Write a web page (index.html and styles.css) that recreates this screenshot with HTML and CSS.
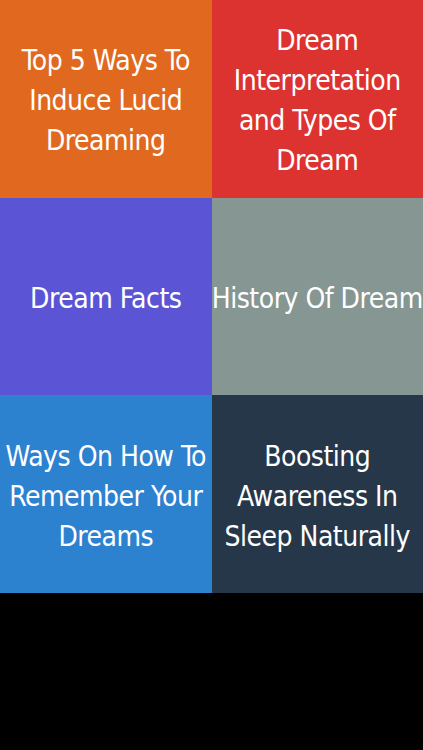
FILE: index.html
```html
<!DOCTYPE html>
<html lang="en">
<head>
    <meta charset="UTF-8">
    <meta name="viewport" content="width=device-width, initial-scale=1.0">
    <title>Dream Guide</title>
    <link rel="stylesheet" href="styles.css">
</head>
<body>
    <div id="menu-grid">
        <div class="tile orange">Top 5 Ways To<br>Induce Lucid<br>Dreaming</div>
        <div class="tile red">Dream<br>Interpretation<br>and Types Of<br>Dream</div>
        <div class="tile purple">Dream Facts</div>
        <div class="tile grey">History Of Dream</div>
        <div class="tile blue">Ways On How To<br>Remember Your<br>Dreams</div>
        <div class="tile navy">Boosting<br>Awareness In<br>Sleep Naturally</div>
    </div>
</body>
</html>
```

FILE: styles.css
```css
body {
    margin: 0;
    background-color: #000;
    font-family: "DejaVu Sans Condensed", "DejaVu Sans", sans-serif;
    height: 100vh;
}
#menu-grid {
    display: grid;
    grid-template-columns: 1fr 1fr;
    grid-template-rows: repeat(3, 197.7px);
}
.tile {
    display: flex;
    justify-content: center;
    align-items: center;
    text-align: center;
    white-space: nowrap;
    color: #fff;
    font-size: 28px;
    letter-spacing: -0.5px;
    line-height: 40px;
    padding-top: 5px;
    overflow: hidden;
}
.orange { background-color: #e0691f; }
.red { background-color: #dd3330; }
.purple { background-color: #5b55d6; }
.grey { background-color: #859693; }
.blue { background-color: #2d82d0; }
.navy { background-color: #26374a; }
```
